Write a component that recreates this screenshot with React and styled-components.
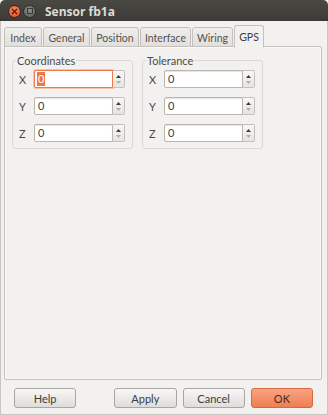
import React from 'react';
import styled, { createGlobalStyle } from 'styled-components';

const Global = createGlobalStyle`
  html, body { margin: 0; padding: 0; background: #f2f1f0; }
  * { box-sizing: border-box; }
`;

const Window = styled.div`
  width: 328px;
  height: 415px;
  display: flex;
  flex-direction: column;
  background: #f2f1f0;
  font-family: Lato, 'Open Sans', sans-serif;
  font-size: 10.5px;
  color: #3c3c3c;
  overflow: hidden;
`;

const TitleBar = styled.div`
  height: 21px;
  flex: none;
  display: flex;
  align-items: center;
  padding: 1px 0 0 8px;
  gap: 2px;
  background: linear-gradient(#4a4944, #3b3a36);
  border-radius: 5px 5px 0 0;
`;

const Knob = styled.span`
  width: 13px;
  height: 13px;
  border-radius: 50%;
  display: flex;
  align-items: center;
  justify-content: center;
  background: ${p => (p.$close ? 'radial-gradient(circle at 50% 35%, #f68a5e, #df4a1d)' : 'radial-gradient(circle at 50% 35%, #8e8d88, #5d5c58)')};
  border: 1px solid #2e2d2a;
`;

const Title = styled.span`
  margin-left: 7px;
  font-family: 'Open Sans', sans-serif;
  font-weight: bold;
  font-size: 12px;
  color: #dfdbd2;
`;

const Body = styled.div`
  flex: 1;
  display: flex;
  flex-direction: column;
  padding: 4px 5px 0 3px;
  border-left: 1px solid #c9c6c1;
  border-right: 1px solid #c9c6c1;
  border-bottom: 1px solid #c9c6c1;
`;

const TabBar = styled.div`
  display: flex;
  align-items: flex-end;
  height: 22px;
  gap: 1px;
  position: relative;
  z-index: 1;
`;

const Tab = styled.div`
  width: ${p => p.$w}px;
  height: ${p => (p.$active ? '23px' : '20px')};
  display: flex;
  align-items: center;
  justify-content: center;
  padding-top: ${p => (p.$active ? '0' : '1px')};
  border: 1px solid #c4c1bc;
  border-bottom: ${p => (p.$active ? '1px solid #f2f1f0' : '1px solid #c4c1bc')};
  border-radius: 3px 3px 0 0;
  background: ${p => (p.$active ? '#f2f1f0' : 'linear-gradient(#efeeec, #e2e0dd)')};
  color: ${p => (p.$active ? '#3c3c3c' : '#55534f')};
  margin-bottom: ${p => (p.$active ? '-1px' : '0')};
`;

const Panel = styled.div`
  flex: 1;
  margin-top: -1px;
  border: 1px solid #c4c1bc;
  box-shadow: inset 0 0 0 1px #fbfaf9;
  border-radius: 0 2px 2px 2px;
  padding: 7px 7px;
  display: flex;
  align-items: flex-start;
  gap: 9px;
`;

const Group = styled.fieldset`
  width: 120px;
  margin: 0;
  padding: 3px 7px 6px 5px;
  border: 1px solid #dcd9d5;
  border-radius: 3px;
  display: flex;
  flex-direction: column;
  gap: 9px;
`;

const Legend = styled.legend`
  padding: 0 1px;
  margin-left: -2px;
  font-size: 11px;
  color: #4c4a46;
`;

const Row = styled.div`
  display: flex;
  align-items: center;
  height: 18px;
`;

const Axis = styled.span`
  width: 16px;
  padding-left: 1px;
  font-size: 11px;
  color: #4c4a46;
`;

const Field = styled.div`
  width: 79px;
  height: 18px;
  background: #fff;
  border: 1px solid ${p => (p.$focus ? '#f07746' : '#b9b6b1')};
  box-shadow: ${p => (p.$focus ? '0 0 0 1px #f8c3a9' : 'inset 0 1px 1px #e6e4e1')};
  border-radius: 2px 0 0 2px;
  display: flex;
  align-items: center;
  padding-left: 2px;
`;

const Value = styled.span`
  padding: 0 1px;
  line-height: 14px;
  font-size: 11px;
  background: ${p => (p.$selected ? '#f07746' : 'transparent')};
  color: ${p => (p.$selected ? '#fff' : '#3c3c3c')};
`;

const Spin = styled.div`
  width: 12px;
  height: 18px;
  border: 1px solid #c4c1bc;
  border-left: none;
  border-radius: 0 2px 2px 0;
  background: linear-gradient(#f7f7f6, #e6e4e1);
  display: flex;
  flex-direction: column;
  align-items: center;
  justify-content: center;
  gap: 3px;
`;

const Footer = styled.div`
  height: 34px;
  flex: none;
  display: flex;
  align-items: center;
  padding: 2px 9px 0 10px;
`;

const Button = styled.button`
  width: 63px;
  height: 20px;
  margin-left: ${p => p.$gap || 0}px;
  border: 1px solid ${p => (p.$primary ? '#d8693f' : '#a9a6a1')};
  border-radius: 3px;
  background: ${p => (p.$primary ? 'linear-gradient(#f7a482, #ef7e52)' : 'linear-gradient(#f8f7f6, #dfddda)')};
  font-family: inherit;
  font-size: 11px;
  color: ${p => (p.$primary ? '#4a2a1c' : '#3c3c3c')};
  padding: 0;
`;

const Arrows = () => (
  <>
    <svg width="5" height="3" viewBox="0 0 5 3"><path d="M0 3 L2.5 0 L5 3 Z" fill="#3c3c3c" /></svg>
    <svg width="5" height="3" viewBox="0 0 5 3"><path d="M0 0 L2.5 3 L5 0 Z" fill="#b3b0ab" /></svg>
  </>
);

const SpinBox = ({ label, focus }) => (
  <Row>
    <Axis>{label}</Axis>
    <Field $focus={focus}>
      <Value $selected={focus}>0</Value>
    </Field>
    <Spin><Arrows /></Spin>
  </Row>
);

const Box = ({ title, first }) => (
  <Group>
    <Legend>{title}</Legend>
    <SpinBox label="X" focus={first} />
    <SpinBox label="Y" />
    <SpinBox label="Z" />
  </Group>
);

const tabs = [
  ['Index', 38],
  ['General', 47],
  ['Position', 48],
  ['Interface', 51],
  ['Wiring', 41],
  ['GPS', 30],
];

export default function App() {
  return (
    <Window>
      <Global />
      <TitleBar>
        <Knob $close>
          <svg width="7" height="7" viewBox="0 0 7 7"><path d="M1 1 L6 6 M6 1 L1 6" stroke="#5a1a08" strokeWidth="1.3" /></svg>
        </Knob>
        <Knob>
          <svg width="6" height="6" viewBox="0 0 6 6"><rect x="0.5" y="0.5" width="5" height="5" fill="none" stroke="#3a3936" /></svg>
        </Knob>
        <Title>Sensor fb1a</Title>
      </TitleBar>
      <Body>
        <TabBar>
          {tabs.map(([t, w]) => (
            <Tab key={t} $w={w} $active={t === 'GPS'}>{t}</Tab>
          ))}
        </TabBar>
        <Panel>
          <Box title="Coordinates" first />
          <Box title="Tolerance" />
        </Panel>
        <Footer>
          <Button>Help</Button>
          <Button $gap={38}>Apply</Button>
          <Button $gap={6}>Cancel</Button>
          <Button $gap={6} $primary>OK</Button>
        </Footer>
      </Body>
    </Window>
  );
}
